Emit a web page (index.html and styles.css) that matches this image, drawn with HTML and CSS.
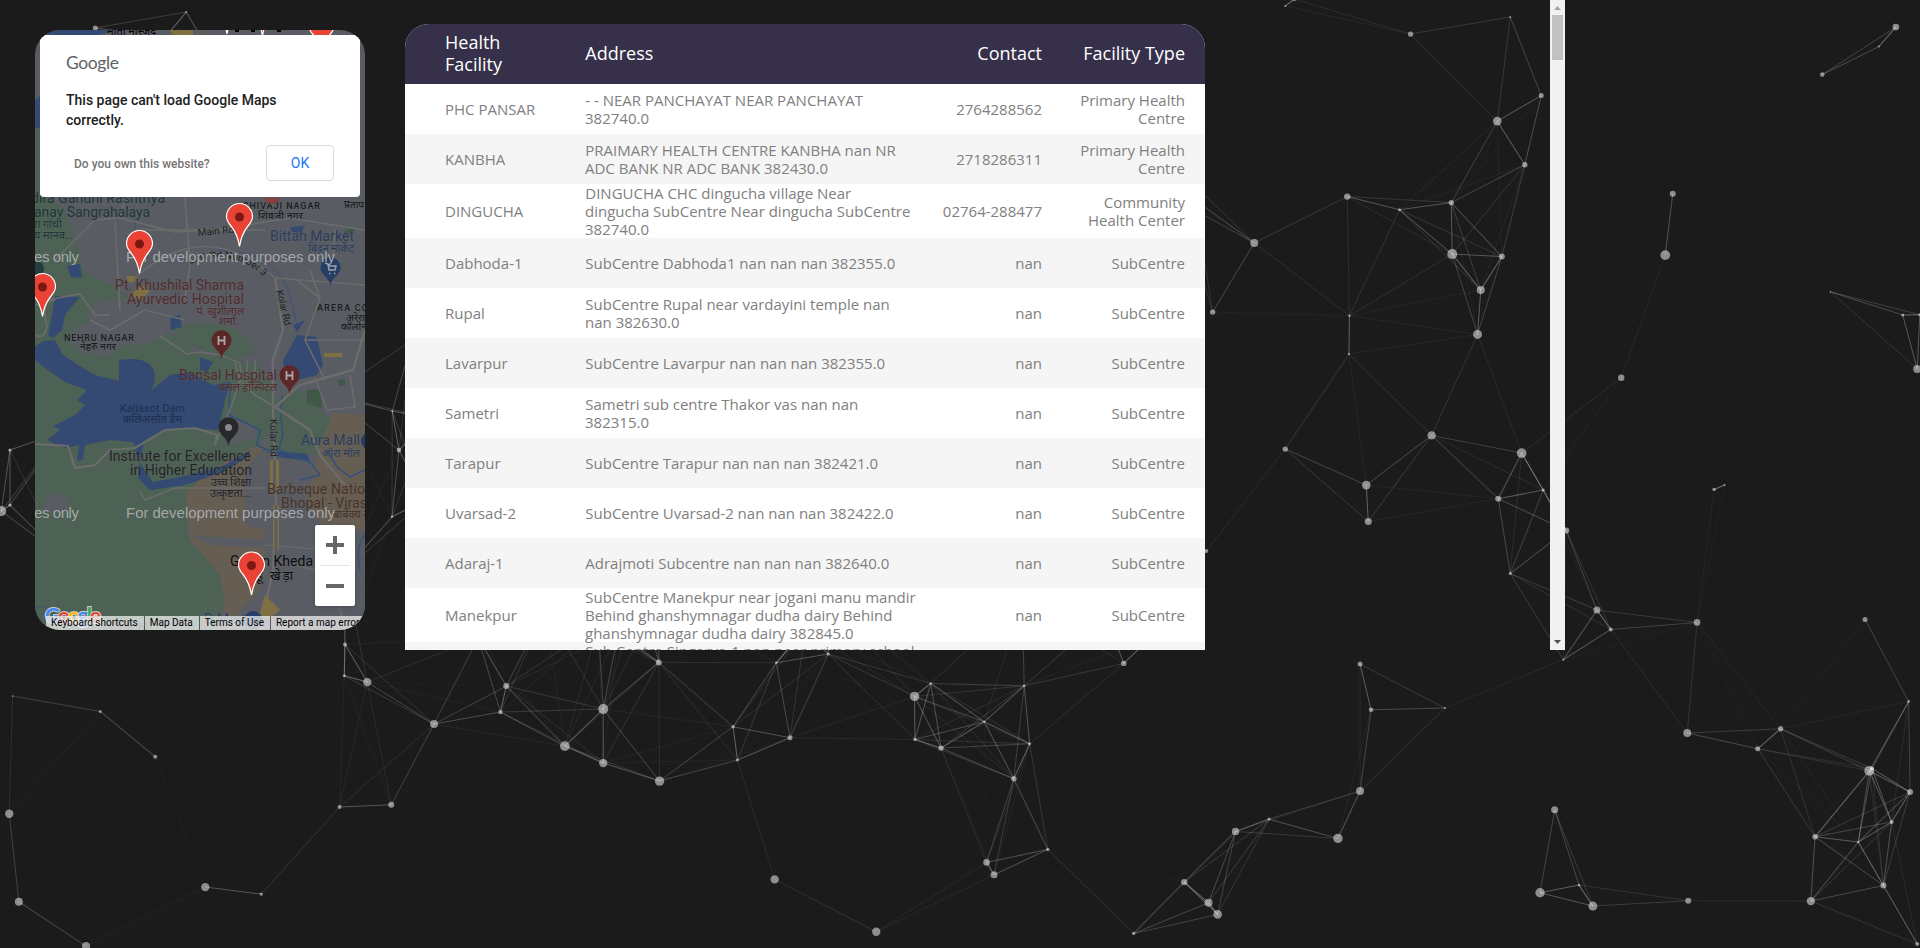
FILE: index.html
```html
<!DOCTYPE html>
<html lang="en">
<head>
<meta charset="utf-8">
<title>Health Facilities</title>
<link rel="stylesheet" href="styles.css">
</head>
<body>
<svg class="particles" width="1920" height="948" viewBox="0 0 1920 948"><g id="particles" transform="translate(.25 .1)"></g></svg>
<main class="layout">
  <section class="map">
    <svg class="map-canvas" width="330" height="600" viewBox="0 0 330 600">
      <defs>
        <g id="pin">
          <path d="M0 0C-1.500-10-4-15-8.500-20.500C-11.500-24-13-26.500-13-30A13 13 0 0 1 13-30C13-26.500 11.500-24 8.500-20.500C4-15 1.500-10 0 0Z" fill="#ea4335" stroke="#fff" stroke-width="1.200"/>
          <circle cy="-29.500" r="4.500" fill="#7c1712"/>
        </g>
        <path id="poi" d="M0 0C-1-6-4-8-7-11.500A10 10 0 1 1 7-11.500C4-8 1-6 0 0Z"/>
      </defs>
      <rect width="330" height="600" fill="#595c63"/>
      <!-- parks -->
      <g fill="#4d6154">
        <path d="M0 98L8 98L8 165L28 178L40 205L48 240L80 258L95 268L60 272L52 290L70 295L125 300L150 310L158 323L195 328L225 335L245 375L240 400L222 415L170 446L151 463L152 505L188 545L192 570L185 600L0 600Z"/>
        <path d="M235 375L262 358L285 380L300 395L285 425L235 422Z"/>
        <path d="M135 298L165 292L205 300L222 322L200 330L160 318Z"/>
        <path d="M272 360L285 359L287 378L272 374ZM310 200L320 198L318 203L309 204ZM303 350l7-1v6l-6 1z" fill="#3e5a46"/>
      </g>
      <g fill="#595c63">
        <path d="M38 300L55 290L130 296L128 308L108 314L85 316L72 327L46 322L35 312Z"/>
        <path d="M192 386Q222 392 222 408L195 415L188 400Z"/>
        <path d="M7 478L14 465L26 463L33 470L32 482L8 482Z"/>
      </g>
      <g fill="#665e52">
        <path d="M298 383L330 385L330 520L300 515L272 470L285 415Z"/>
        <path d="M151 463L175 440L215 418L232 415L210 440L210 495L230 500L230 545L220 565L205 580L200 600L185 600L190 570L185 545L155 510Z"/>
      </g>
      <path d="M155 505L230 510V500L330 500V600H220L232 518L175 515Z" fill="#595c63"/>
      <!-- water -->
      <g fill="#344a72">
        <path d="M0 0H80L65 5H0ZM0 70L6 65V98H0Z"/>
        <path d="M0 317L8 311L20 310L28 325L40 333L60 345L84 351V330Q118 325 120 346Q120 358 112 364L135 345L155 342L178 355L195 352L190 370L183 400L150 398L130 400L110 410L104 432L118 452L150 446L190 435L215 420L213 426L188 442L150 455L115 460L103 448L105 430L98 412L75 410L50 415L48 430L42 431L44 415L30 418L12 410L25 400L18 396L40 385L50 375L42 370L52 360L30 352L10 338L0 330Z"/>
        <path d="M248 330L255 318L262 305L282 307L288 335L282 345L262 350L250 345Z"/>
        <path d="M165 327L178 332L172 342L165 340ZM135 287L145 285L147 297L136 300ZM258 295L270 290L262 302ZM32 236L45 234L47 247L36 248ZM20 266L45 267L38 275L30 285L27 300L18 308L13 305L17 285ZM255 197l14-1l-2 7l-10-1zM242 421L272 424L275 431L242 427Z"/>
      </g>
      <g fill="none" stroke="#30517f" stroke-width="1.500">
        <path d="M195 352L194 385L225 400L222 415L240 424M247 365L246 388L248 405L244 420L275 432L285 445L265 450M292 420L302 437L315 447L330 440M330 505Q320 515 325 540"/>
        <path d="M180 220Q240 220 255 265L262 295M100 200L100 185M0 577H15" stroke-width=".8"/>
      </g>
      <!-- roads -->
      <g fill="none" stroke="#6c6c6c" stroke-width="1.600">
        <path d="M0 305Q10 310 12 295Q8 285 12 270L45 264L60 285L75 285M0 275L20 270"/>
        <path d="M125 306L152 324L165 322L185 325L205 333L206 345L198 372L180 415M200 333L205 350L220 365L240 377"/>
        <path d="M20 230L60 190L85 188L140 202L180 200L255 188L330 200M80 192L85 280M150 168L155 235L150 270M100 248Q170 185 240 248L265 250L330 255"/>
        <path d="M240 248L248 300L238 330L238 380L241 470L238 540L225 600" stroke-width="2.500"/>
        <path d="M330 300L318 340L265 355L240 377L275 400L285 425L310 455" stroke-width="2.500"/>
        <path d="M0 414L33 416L40 438L60 435L75 420L100 418L130 400L160 398L182 405L180 415" stroke-width="2.200"/>
        <path d="M105 462L110 470L140 458L230 458M212 330V355H240M220 330V352M280 348L292 380L320 377L315 345M262 250L285 268L270 310L290 350M270 310H330M300 200L295 255M285 268L275 240M90 170L85 188M100 200H230M55 290L75 300L110 280L150 290"/>
        <path d="M230 515L320 522L280 540L240 530M300 560L310 600" stroke-width="1.200"/>
      </g>
      <path d="M135 0H158V5H138ZM92 246h8v6h-8zM95 265l12-10 8 6-10 10zM289 323h18v4h-18zM235 430h9v30h-9zM238 475h6v45h-6zM230 565L245 580L232 590L225 583Z" fill="#7f7043"/>
      <g fill="none" stroke="#595c63" stroke-width="3"><path d="M239.500 430V465M241 475V520"/></g>

      <!-- place labels -->
      <g class="place">
        <g fill="#1c3635">
          <text x="-4" y="173" textLength="134">dira Gandhi Rashtriya</text>
          <text x="-1" y="187" textLength="116">anav Sangrahalaya</text>
          <text class="hi" x="-2" y="198">रा गांधी</text><text class="hi" x="-1" y="209">य मानव...</text>
        </g>
        <g class="caps"><text x="208" y="179" textLength="77">SHIVAJI NAGAR</text><text class="hi" x="223" y="189" textLength="45">शिवजी नगर</text>
          <text x="29" y="311" textLength="70">NEHRU NAGAR</text><text class="hi" x="45" y="320" textLength="36">नेहरु नगर</text>
          <text x="282" y="281" textLength="51">ARERA CO</text><text class="hi" x="311" y="291">अरेरा</text><text class="hi" x="306" y="300">कॉलोनी</text>
          <text class="hi" x="309" y="178">प्रताप</text></g>
        <text class="road" transform="translate(163 206) rotate(-5)">Main Rd</text>
        <path id="link" d="M155 234Q200 218 229 247" fill="none"/>
        <text class="road"><textPath href="#link">Link Rd Number 3</textPath></text>
        <text class="road" transform="translate(241 261) rotate(76)" textLength="36">Kolar Rd</text>
        <text class="road" transform="translate(235 389) rotate(89)" textLength="38">Kolar Rd</text>
        <g fill="#2a3c5b"><text x="235" y="211" textLength="84">Bittan Market</text><text class="hi" x="273" y="222" textLength="46">बिट्टन मार्केट</text>
          <text x="266" y="415" textLength="59">Aura Mall</text><text class="hi" x="287" y="427" textLength="38">ऑरा मॉल</text></g>
        <g fill="#512b2b"><text x="80" y="260" textLength="129">Pt. Khushilal Sharma</text><text x="92" y="274" textLength="117">Ayurvedic Hospital</text>
          <text class="hi" x="161" y="285" textLength="48">पं. खुशीलाल</text><text class="hi" x="184" y="295" textLength="25">शर्मा...</text>
          <text x="144" y="350" textLength="98">Bansal Hospital</text><text class="hi" x="184" y="361" textLength="58">बंसल हॉस्पिटल</text></g>
        <g class="lake"><text x="85" y="382" textLength="65">Kaliasot Dam</text><text class="hi" x="88" y="393" textLength="59">कलिअसोत डैम</text></g>
        <g fill="#222428"><text x="74" y="431" textLength="142">Institute for Excellence</text><text x="95" y="445" textLength="122">in Higher Education</text>
          <text class="hi" x="176" y="456" textLength="40">उच्च शिक्षा</text><text class="hi" x="175" y="467" textLength="41">उत्कृष्टता...</text></g>
        <g fill="#493125"><text x="232" y="464" textLength="98">Barbeque Natio</text><text x="246" y="478" textLength="86">Bhopal - Viras</text><text class="hi" x="298" y="488">बार्बेक्य ने</text></g>
        <g fill="#0c0c0d"><text x="195" y="536" textLength="83">Gehun Kheda</text><text class="hi big" x="221" y="550" textLength="37">हू खेड़ा</text></g>
        <text x="169" y="594" fill="#2b4268">D Mart</text><text x="75" y="603" fill="#333">Chichli</text>
        <text class="hi" x="72" y="5">माता मस्जिद</text>
      </g>

      <g fill="#5c2726"><use href="#poi" x="186.500" y="329"/><use href="#poi" x="254.500" y="364"/></g>
      <path d="M183.500 306V315M189.500 306V315M183.500 310.500H189.500M251.500 341V350M257.500 341V350M251.500 345.500H257.500" stroke="#aaa" stroke-width="1.800" fill="none"/>
      <use href="#poi" x="193.500" y="416" fill="#26282b"/><circle cx="193.500" cy="397.500" r="3.500" fill="#888"/>
      <use href="#poi" x="295.500" y="256" fill="#263d66"/>
      <path d="M290 233L293 234L294 240H300L301 236H294M294 243.500H295.500M299 243.500H300.500" fill="none" stroke="#9aa3b2" stroke-width="1.500"/>
      <circle cx="218" cy="590" r="9" fill="#293b68"/><circle cx="335" cy="411" r="9" fill="#263d66"/>
      <circle cx="1" cy="239" r="8" fill="#213d3c"/><path d="M228 168h18q-5 6-9 6t-9-6z" fill="#853f3d"/>

      <g class="watermark">
        <text x="-1" y="231.500" textLength="45">es only</text><text x="91" y="231.500" textLength="209">For development purposes only</text>
        <text x="-1" y="487.500" textLength="45">es only</text><text x="91" y="487.500" textLength="209">For development purposes only</text>
      </g>
      <use href="#pin" x="104.500" y="243.500"/><use href="#pin" x="204.500" y="216.500"/><use href="#pin" x="7.500" y="286.500"/><use href="#pin" x="216.500" y="565"/>
      <use href="#pin" x="192" y="4"/><use href="#pin" x="227.500" y="6"/><use href="#pin" x="286.500" y="25"/>
      <path d="M200 0h4v2h-4zM216 0h4v2h-4zM242 0h4v2h-4z"/>
      <text class="logo" x="10" y="593" textLength="56"><tspan fill="#4285f4">G</tspan><tspan fill="#ea4335">o</tspan><tspan fill="#fbbc05">o</tspan><tspan fill="#4285f4">g</tspan><tspan fill="#34a853">l</tspan><tspan fill="#ea4335">e</tspan></text>
    </svg>
    <div class="dialog">
      <div class="dialog-logo">Google</div>
      <p class="dialog-title">This page can't load Google Maps correctly.</p>
      <div class="dialog-row"><span>Do you own this website?</span><button class="ok">OK</button></div>
    </div>
    <div class="zoom"><span class="plus"></span><i></i><span class="minus"></span></div>
    <div class="credits"><span>Keyboard shortcuts</span><span>Map Data</span><span>Terms of Use</span><span>Report a map error</span></div>
  </section>

  <section class="scroller">
    <div class="table-wrap">
      <table>
        <thead><tr><th>Health<br>Facility</th><th>Address</th><th>Contact</th><th>Facility Type</th></tr></thead>
        <tbody>
          <tr><td>PHC PANSAR</td><td>- - NEAR PANCHAYAT NEAR PANCHAYAT<br>382740.0</td><td>2764288562</td><td>Primary Health<br>Centre</td></tr>
          <tr><td>KANBHA</td><td>PRAIMARY HEALTH CENTRE KANBHA nan NR<br>ADC BANK NR ADC BANK 382430.0</td><td>2718286311</td><td>Primary Health<br>Centre</td></tr>
          <tr><td>DINGUCHA</td><td>DINGUCHA CHC dingucha village Near<br>dingucha SubCentre Near dingucha SubCentre<br>382740.0</td><td>02764-288477</td><td>Community<br>Health Center</td></tr>
          <tr><td>Dabhoda-1</td><td>SubCentre Dabhoda1 nan nan nan 382355.0</td><td>nan</td><td>SubCentre</td></tr>
          <tr><td>Rupal</td><td>SubCentre Rupal near vardayini temple nan<br>nan 382630.0</td><td>nan</td><td>SubCentre</td></tr>
          <tr><td>Lavarpur</td><td>SubCentre Lavarpur nan nan nan 382355.0</td><td>nan</td><td>SubCentre</td></tr>
          <tr><td>Sametri</td><td>Sametri sub centre Thakor vas nan nan<br>382315.0</td><td>nan</td><td>SubCentre</td></tr>
          <tr><td>Tarapur</td><td>SubCentre Tarapur nan nan nan 382421.0</td><td>nan</td><td>SubCentre</td></tr>
          <tr><td>Uvarsad-2</td><td>SubCentre Uvarsad-2 nan nan nan 382422.0</td><td>nan</td><td>SubCentre</td></tr>
          <tr><td>Adaraj-1</td><td>Adrajmoti Subcentre nan nan nan 382640.0</td><td>nan</td><td>SubCentre</td></tr>
          <tr><td>Manekpur</td><td>SubCentre Manekpur near jogani manu mandir<br>Behind ghanshymnagar dudha dairy Behind<br>ghanshymnagar dudha dairy 382845.0</td><td>nan</td><td>SubCentre</td></tr>
          <tr><td></td><td>Sub Centre Singarva-1 nan near primary school<br>&nbsp;<br>&nbsp;</td><td></td><td></td></tr>
        </tbody>
      </table>
    </div>
    <div class="bar">
      <svg width="15" height="15" viewBox="0 0 15 15"><path d="M4 10L7.500 6L11 10Z" fill="#a3a3a3"/></svg>
      <div class="thumb"></div>
      <svg width="15" height="15" viewBox="0 0 15 15"><path d="M4 5L7.500 9L11 5Z" fill="#505050"/></svg>
    </div>
  </section>
</main>
<script src="particles.js"></script>
</body>
</html>
```
FILE: styles.css
```css
* { box-sizing: border-box; }
body { margin: 0; height: 948px; overflow: hidden; background: #1b1b1b; font-family: "Open Sans", sans-serif; }
.particles { position: absolute; inset: 0; }
.layout { position: relative; display: flex; align-items: flex-start; padding-left: 35px; }

.map { position: relative; width: 330px; height: 600px; margin: 30px 40px 0 0; border-radius: 25px; overflow: hidden; flex: none; font-family: Roboto, "Noto Sans", sans-serif; }
.map-canvas { display: block; }
.place text { font-size: 14px; paint-order: stroke; stroke: rgba(110, 112, 116, .3); stroke-width: 1.200px; }
.place .caps text { font-size: 9px; font-weight: 500; fill: #1a1b1d; }
.place .road { font-size: 10px; fill: #1f2022; }
.place text.hi, .place .caps text.hi { font-size: 11px; }
.place .caps text.hi { font-size: 10px; }
.place .lake text { font-size: 11px; fill: #1d2e50; stroke: none; }
.place text.big { font-size: 13px; }
.watermark { font-family: "Liberation Sans", Arial, sans-serif; font-size: 15px; fill: #b0b2b5; fill-opacity: .9; }
.logo { font: 700 21px Lato, sans-serif; paint-order: stroke; stroke: #ccc; stroke-width: 2px; }

.dialog { position: absolute; left: 5px; top: 5px; width: 320px; height: 162px; padding: 16px 26px 0; background: #fff; border-radius: 4px; }
.dialog-logo { height: 25px; font: 400 17.500px/24px Lato, sans-serif; color: #5f6368; letter-spacing: -.4px; }
.dialog-title { margin: 14px 0 0; font-size: 14px; font-weight: 500; line-height: 20px; color: #212121; width: 230px; }
.dialog-row { display: flex; justify-content: space-between; align-items: center; margin-top: 15px; padding: 0 0 0 8px; font-size: 12px; font-weight: 500; color: #757575; }
.dialog-row span { padding-top: 1px; }
.ok { width: 68px; height: 36px; border: 1px solid #dadce0; border-radius: 4px; background: #fff; color: #1a78f8; font: 400 14px Roboto, sans-serif; }

.zoom { position: absolute; left: 280px; top: 495px; width: 40px; height: 81px; background: #fff; border-radius: 2px; display: flex; flex-direction: column; align-items: center; justify-content: space-between; box-shadow: 0 1px 4px -1px rgba(0, 0, 0, .3); }
.zoom i { width: 30px; height: 1px; background: #e6e6e6; }
.zoom span { width: 18px; height: 40px; background: linear-gradient(#666, #666) center / 18px 4px no-repeat; }
.zoom .plus { background: linear-gradient(#666, #666) center / 18px 4px no-repeat, linear-gradient(#666, #666) center / 4px 18px no-repeat; }

.credits { position: absolute; left: 11px; right: 0; bottom: 0; height: 14px; display: flex; white-space: nowrap; font-size: 10px; line-height: 13px; color: #000; }
.credits span { flex: none; padding: 0 6px 0 5px; background: rgba(245, 245, 245, .72); margin-right: 1px; }
.credits span:last-child { margin: 0; padding-right: 8px; }

.scroller { width: 1160px; height: 650px; overflow: hidden; display: flex; justify-content: space-between; }
.table-wrap { width: 800px; margin-top: 24px; background: #fff; border-radius: 24px 24px 0 0; overflow: hidden; }
table { width: 800px; border-collapse: collapse; table-layout: fixed; }
th, td { padding: 0; text-align: left; font-weight: 400; white-space: nowrap; vertical-align: middle; }
th { height: 60px; background: #36304a; color: #fff; font-size: 18px; line-height: 22px; padding-bottom: 2px; }
td { height: 50px; color: #808080; font-size: 15px; line-height: 18px; }
th:nth-child(1) { width: 180px; }
th:nth-child(2) { width: 340px; }
th:nth-child(3) { width: 117px; }
th:first-child, td:first-child { padding-left: 40px; }
th:nth-child(n+2), td:nth-child(n+2) { text-indent: .3px; }
th:nth-child(n+3), td:nth-child(n+3) { text-align: right; }
th:last-child, td:last-child { padding-right: 20px; }
tbody tr:nth-child(even) { background: #f5f5f5; }
.bar { width: 15px; height: 650px; background: #f1f1f1; display: flex; flex-direction: column; }
.thumb { height: 45px; margin: 0 2px auto; background: #c1c1c1; }
.bar svg { display: block; flex: none; }
```
FILE: particles.js
```javascript
// x, y, radius of every particle
const nodes = [
  [1285,6,1],[1294,-1,2],[1410.3,34,2.7],[1510,17,1],[1541,95.5,2.5],[1497,121,4.3],[1524.6,164.6,2.7],[1347,196.5,3.2],
  [1399.3,209.7,1.5],[1451,202.5,2.7],[1452,254,5],[1501.6,256.5,3],[1480.5,290,4],[1477.3,334.3,4.5],[1349.2,315.6,1.2],
  [1348.7,354,1.2],[1254,242.8,4],[1212.4,312,2.7],[1431.4,435.3,4.2],[1285,449,2.7],[1521.4,453,4.9],[1895.6,27,3.3],
  [1878.6,46.5,1],[1822,74.5,2.3],[1672.5,193.7,3],[1665,255,4.9],[1621,377.7,3.2],[1830,291.6,.8],[1902.5,315,1.5],
  [1919.5,314.7,1.5],[1917,369,4],[1366,485,4.3],[1368,521.3,3.5],[1498,498.6,3],[1543,490,1.5],[1206,551,2],
  [1510,573.4,1.5],[1566,530.3,3],[1596.7,610,3.5],[1610.5,629.3,2],[1563,659.7,1],[1696.8,622.3,3.3],[1713.8,489.3,1.7],
  [1724.3,485,1],[1864.8,619.3,2.5],[1359.8,664,2.5],[1370.8,709.7,2.3],[1444.7,708,1],[1359.8,791,4],[1337.7,838.3,4.7],
  [1235.3,831.3,3.7],[1268.9,819,1.5],[1208.3,902.7,4],[1217.4,914.3,4.3],[1554.4,809.7,3.5],[1539.8,892.7,4.7],
  [1592.6,906,4.5],[1578.8,885,1.3],[1688,900.7,3],[1810.6,901,4.2],[1814.8,836.7,2.8],[1687,733,4],[1780.3,728.7,2.7],
  [1757.4,748.7,2.5],[1908.4,701.3,1.3],[1869,770.7,4.9],[1871.7,768.3,2],[1909.8,792,3],[1891.4,822,2],[1858,842,1.2],
  [1883.2,885.3,3],[1917,944,2],[658.5,662.3,3],[776,662.7,1.3],[828,654,1.5],[603,709,5],[732.8,726.6,1.7],
  [789.8,737.7,2.5],[737.2,760,1.5],[603,763,4.2],[659.3,781,4.7],[914.3,696.3,4.7],[930.5,683.3,1.2],[1023.9,685.7,1.3],
  [1123.5,663.3,2.7],[984,721.7,1.2],[914.7,739.3,1.7],[940.8,748,2.7],[1029.4,743.7,1.5],[1013.6,778.7,2.7],
  [1047.6,849.3,1.7],[986.3,862.3,3.3],[993.8,874.7,3.5],[774.4,879.3,4.2],[876,931.7,4.2],[1184,882,3.2],
  [1133.4,933.3,1.7],[344.8,644.3,2],[344,675.7,1.5],[367,682,4.2],[433.8,724,4],[506,686,3],[500.2,712,2.2],
  [564.6,746,4.9],[339.3,807,2],[391,804.7,3],[12.3,696,.8],[100,711.3,1.5],[155,756.7,2],[9,813.7,4.2],
  [18.6,901.7,4],[85.8,946,4.2],[205,887,4.2],[261,894,1.7],[95,28,2.5],[186,12,1],[412,340,2],[392,411,1],
  [398.7,450,2.3],[391.7,516.7,1.2],[9.7,450,1.7],[9.7,505,1.7],[1,511,5],
  [165,37,1],[213,58,1],[62,432,1],[62,556,1],[330,395,1],[345,570,1],[430,418,1],[425,500,1],
  [478,638,1],[598,625,1],[618,632,1],[659,600,1],[805,630,1],[829,600,1],[640,590,1],[1022,600,1],[1150,638,1],
  [1105,615,1],[1170,162,1],[1180,202,1],[1195,200,1],[545,610,1]
];
const ns = 'http://www.w3.org/2000/svg';
const layer = document.getElementById('particles');
function add(name, attrs) {
  const el = document.createElementNS(ns, name);
  for (const key in attrs) el.setAttribute(key, attrs[key]);
  layer.appendChild(el);
}
nodes.forEach(([x, y, r]) => add('circle', { cx: x, cy: y, r: r, fill: '#fff', 'fill-opacity': 0.5 }));
nodes.forEach(([x1, y1], i) => {
  nodes.slice(i + 1).forEach(([x2, y2]) => {
    const alpha = 0.4 * (1 - Math.hypot(x1 - x2, y1 - y2) / 150);
    if (alpha > 0) add('line', { x1, y1, x2, y2, stroke: '#fff', 'stroke-width': 1.05, 'stroke-opacity': alpha.toFixed(3) });
  });
});
```
